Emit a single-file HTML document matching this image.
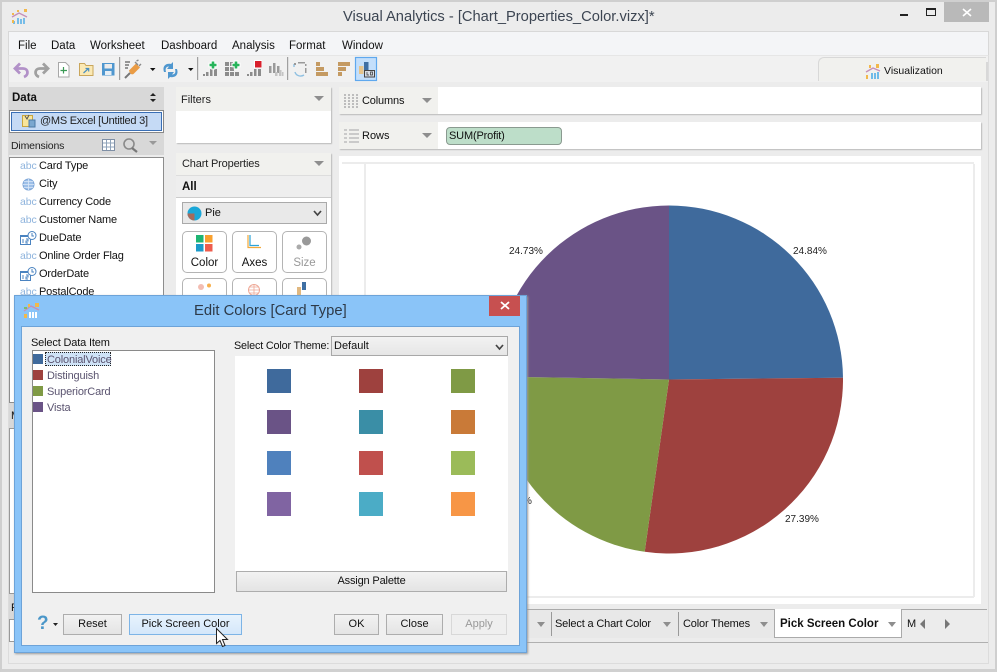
<!DOCTYPE html>
<html><head><meta charset="utf-8"><style>
html,body{margin:0;padding:0}
body{width:997px;height:672px;overflow:hidden;position:relative;background:#ececec;font-family:"Liberation Sans",sans-serif;font-size:11px;color:#111}
.a,.t{position:absolute}
.t{white-space:nowrap;line-height:14px;transform:translateY(1px)}
.n{letter-spacing:-.16px}
svg{position:absolute;overflow:visible}
.tri{position:absolute;width:0;height:0;border-left:5px solid transparent;border-right:5px solid transparent;border-top:5px solid #8e8e8e}
.btn{position:absolute;box-sizing:border-box;border:1px solid #adadad;background:linear-gradient(#f2f2f2,#e4e4e4);text-align:center;font-size:11px;line-height:19px;color:#111}
.pb{position:absolute;box-sizing:border-box;border:1px solid #b4b4b4;border-radius:5px;background:#fff;text-align:center;width:45px;height:42px}
.panel{position:absolute;background:#fff;box-shadow:1px 1px 1px #bbb}
.sw{position:absolute;width:24px;height:24px}
.li{position:absolute;left:33px;width:10px;height:10px}
.abc{color:#8fb4dd;font-size:10.5px;letter-spacing:-.1px}
</style></head><body>
<div class="a" style="left:0;top:0;width:997px;height:672px;border:2px solid #cfcfcf;border-bottom:3px solid #d0d0d0;box-sizing:border-box"></div>

<!-- title -->
<svg style="left:11px;top:9px" width="17" height="15" viewBox="0 0 17 15"><path d="M1 8L8 4l8 4" fill="none" stroke="#c58fb8" stroke-width="1.3"/><path d="M2 12h2v3H2zM6 9h2v6H6zM9 10h2v5H9zM12 9h2v6h-2z" fill="#77bde8"/><path d="M1 4h2v2H1zM6 1h2v2H6zM13 0h3v3h-3zM1 11h2v3H1z" fill="#f2b84b"/></svg>
<div class="t" style="left:343px;top:8px;font-size:14.7px;line-height:17px;color:#3c4552">Visual Analytics - [Chart_Properties_Color.vizx]*</div>
<div class="a" style="left:900px;top:14px;width:8px;height:2px;background:#222"></div>
<div class="a" style="left:926px;top:8px;width:8px;height:5px;border:1px solid #222;border-top-width:2px"></div>
<div class="a" style="left:944px;top:2px;width:45px;height:20px;background:#b9b9b9"></div>
<svg style="left:963px;top:9px" width="8" height="7"><path d="M0 0L8 7M8 0L0 7" stroke="#fff" stroke-width="1.6"/></svg>

<!-- menu -->
<div class="a" style="left:8px;top:31px;width:981px;height:25px;background:#f4f5f7;border:1px solid #d8d8d8;border-bottom:1px solid #e6e6e6;box-sizing:border-box"></div>
<div class="a" style="left:9px;top:56px;width:979px;height:26px;background:#f1f1f1"></div>
<div class="a" style="left:8px;top:56px;width:1px;height:607px;background:#dcdcdc"></div>
<div class="a" style="left:988px;top:56px;width:1px;height:607px;background:#dcdcdc"></div>
<div class="a" style="left:8px;top:663px;width:981px;height:1px;background:#dcdcdc"></div>
<div class="t" style="left:18px;top:38px;font-size:11.5px">File</div>
<div class="t" style="left:51px;top:38px;font-size:11.5px">Data</div>
<div class="t" style="left:90px;top:38px;font-size:11.5px">Worksheet</div>
<div class="t" style="left:161px;top:38px;font-size:11.5px">Dashboard</div>
<div class="t" style="left:232px;top:38px;font-size:11.5px">Analysis</div>
<div class="t" style="left:289px;top:38px;font-size:11.5px">Format</div>
<div class="t" style="left:342px;top:38px;font-size:11.5px">Window</div>

<!-- toolbar -->
<svg style="left:0;top:56px" width="400" height="26" viewBox="0 56 400 26">
<path d="M20 63.500L15 68.500L20 73.500M15.500 68.500H23C28.500 68.500 29 75 24 77" fill="none" stroke="#b291c8" stroke-width="2.800"/>
<path d="M43 63.500L48 68.500L43 73.500M47.500 68.500H40C34.500 68.500 34 75 39 77" fill="none" stroke="#a0a0a0" stroke-width="2.800"/>
<path d="M58.500 62.500h7l3.500 3.500v11h-10.500z" fill="#fff" stroke="#a8a8a8"/><path d="M63.500 67v6.500M60.500 70.500h6.500" stroke="#3a9a55" stroke-width="1.200"/>
<path d="M79.500 75.500v-12h5l1.500 2h7v10z" fill="#fbe9b4" stroke="#c9a65c"/><path d="M83.500 73l5-4.500m-3 0h3.200v3" stroke="#4a8fc0" fill="none" stroke-width="1.200"/>
<rect x="102.500" y="63.500" width="11.500" height="11.500" fill="#4f97cf" stroke="#4f97cf"/><rect x="104.500" y="64" width="7.500" height="4.500" fill="#ececec"/><rect x="105" y="71" width="6.500" height="4" fill="#e6eef5"/>
<rect x="119" y="57" width="1.200" height="23" fill="#a0a0a0"/>
<path d="M129 70.500l7-7 4 4-6.500 6.500q-3 1.500-4.500-3.500z" fill="#ea9c45"/><path d="M135 62l3 3M139 66l2-2M136.500 61l2-1" stroke="#8a8a8a" stroke-width="1.400" fill="none"/><path d="M125 62h5M125 65h4M125 68h3" stroke="#777" stroke-width="1.500"/><path d="M125 78l5-5" stroke="#777" stroke-width="2"/>
<path d="M150 68h5.500l-2.750 3z" fill="#111"/>
<path d="M164 72c-2-6 2-9 7-8l2-2v7h-6l2-2.500c-3 0-4 2-3 5.500z" fill="#4f97cf"/><path d="M177 69c2 6-2 9-7 8l-2 2v-7h6l-2 2.500c3 0 4-2 3-5.500z" fill="#4f97cf"/>
<path d="M188 68h5.500l-2.750 3z" fill="#111"/>
<rect x="197" y="57" width="1.200" height="23" fill="#a0a0a0"/>
<path d="M203 74h2v2h-2zM206 72h2.500v4H206zM210 69h2.500v7H210zM214 69h3v7h-3z" fill="#8c8c8c"/>
<path d="M213 60.500v9M208.500 65h9" stroke="#fff" stroke-width="4.500"/><path d="M213 61.500v7M209.500 65h7" stroke="#27b45a" stroke-width="2.600"/>
<path d="M225 62h4v4h-4zM230 62h3v4h-3zM225 67h4v4h-4zM230 67h4v4h-4zM225 72h4v4h-4zM230 72h4v4h-4zM235 72h4v4h-4z" fill="#8c8c8c"/>
<path d="M236 60.500v9M231.500 65h9" stroke="#fff" stroke-width="4.500"/><path d="M236 61.500v7M232.500 65h7" stroke="#27b45a" stroke-width="2.600"/>
<path d="M247 74h2v2h-2zM250 72h2.500v4H250zM254 69h2.500v7H254zM258 69h3v7h-3z" fill="#8c8c8c"/>
<rect x="254" y="60" width="8" height="8" fill="#fff"/><rect x="255" y="61" width="6.500" height="6.500" fill="#d81f2b"/>
<path d="M269 66h2.500v7H269zM273 63h2.500v10H273zM277 66h2.500v7H277z" fill="#9a9a9a"/><path d="M275 72h2.500v4H275zM279 70h2.500v6H279zM282 72h1.500v4H282z" fill="#c4c4c4"/>
<rect x="287" y="57" width="1.200" height="23" fill="#a0a0a0"/>
<path d="M294 64v3M295 72c1 4 6 5 9 3" fill="none" stroke="#8fc0e2" stroke-width="1.400"/><path d="M294 63h2v2h-2zM298 62h7v1.500h-7zM305 64h1.500v2H305zM305 68h1.500v5H305z" fill="#9a9a9a"/>
<path d="M316 62h4v4h-4zM316 67h8v4h-8zM316 72h12v4h-12z" fill="#c49a62"/>
<path d="M338 62h12v4h-12zM338 67h8v4h-8zM338 72h4v4h-4z" fill="#c49a62"/>
<rect x="355.500" y="57.500" width="21" height="23" fill="#c4dffb" stroke="#5fa8ee" stroke-width="1.200"/>
<rect x="359" y="66" width="4.500" height="8" fill="#e6c48c"/><rect x="364" y="62" width="4.500" height="9" fill="#3f6fa3"/><rect x="364.500" y="70.500" width="10" height="6.500" fill="#d7dde6" stroke="#444"/><path d="M367 72v3h2M370.500 72h2v3h-2z" fill="none" stroke="#333" stroke-width=".7"/>
</svg>

<!-- Visualization tab -->
<div class="a" style="left:818px;top:57px;width:168px;height:24px;background:#f1f1ee;border-radius:6px 0 0 0;border-top:1px solid #d8d8d8;border-left:1px solid #d8d8d8;box-sizing:border-box"></div>
<div class="a" style="left:986px;top:62px;width:2px;height:19px;background:#d8d8d8"></div>
<svg style="left:865px;top:64px" width="16" height="15"><path d="M1 8L8 4l7 3" fill="none" stroke="#c58fb8" stroke-width="1.300"/><path d="M6 9h2v6H6zM9 9h2v6H9zM12 8h2v7h-2z" fill="#6fbbe9"/><path d="M1 11h2v4H1zM11 0h3v4h-3zM4 1h2v3H4z" fill="#f2b84b"/></svg>
<div class="t" style="left:884px;top:63px;font-size:10.5px">Visualization</div>

<!-- Data pane -->
<div class="a" style="left:9px;top:87px;width:155px;height:68px;background:#d8d8d8"></div>
<div class="t" style="left:12px;top:90px;font-weight:bold;font-size:11.5px">Data</div>
<svg style="left:149px;top:92px" width="8" height="11"><path d="M1 4l3-3 3 3zM1 7h6L4 10z" fill="#222"/></svg>
<div class="a" style="left:9px;top:110px;width:155px;height:23px;box-sizing:border-box;border:1px solid #888;background:#fff;padding:1px"><div style="height:19px;box-sizing:border-box;border:1px solid #3a6fb5;background:#c5daf5"></div></div>
<svg style="left:22px;top:114px" width="14" height="14"><rect x=".5" y="1.500" width="10" height="11" fill="#f8e59a" stroke="#c9a53e"/><path d="M3 2l2 3 2-4" stroke="#555" fill="none"/><rect x="7" y="6" width="6" height="7" fill="#7aa7d0" stroke="#4a78a5"/></svg>
<div class="t" style="left:40px;top:113px;color:#222;letter-spacing:-.25px">@MS Excel [Untitled 3]</div>
<div class="t n" style="left:11px;top:138px;color:#222;font-size:10.5px">Dimensions</div>
<svg style="left:102px;top:138px" width="58" height="15"><rect x=".5" y="1.500" width="12" height="11" fill="#fff" stroke="#7f8fa5"/><path d="M1 5h11M1 9h11M4.500 2v10M8.500 2v10" stroke="#8fa3ba"/><circle cx="27" cy="6" r="5" fill="none" stroke="#8a8a8a" stroke-width="1.600"/><path d="M30 10l5 4" stroke="#777" stroke-width="2.200"/><path d="M47 3h8l-4 4z" fill="#999"/></svg>
<div class="a" style="left:9px;top:157px;width:155px;height:246px;box-sizing:border-box;border:1px solid #8d8d8d;background:#fff"></div>
<div class="t abc" style="left:20px;top:158px">abc</div><div class="t n" style="left:39px;top:158px">Card Type</div>
<svg style="left:22px;top:178px" width="13" height="13"><circle cx="6.500" cy="6.500" r="5.500" fill="#9ec0e8" stroke="#7fa7d8"/><path d="M1 6.500h11M6.500 1v11M2 3.500h9M2 9.500h9" stroke="#dbe8f7" stroke-width=".8"/></svg><div class="t n" style="left:39px;top:176px">City</div>
<div class="t abc" style="left:20px;top:194px">abc</div><div class="t n" style="left:39px;top:194px">Currency Code</div>
<div class="t abc" style="left:20px;top:212px">abc</div><div class="t n" style="left:39px;top:212px">Customer Name</div>
<svg style="left:20px;top:231px" width="17" height="15"><rect x=".5" y="4.500" width="10" height="9" fill="#fff" stroke="#4a83c0"/><rect x="1" y="4" width="10" height="2" fill="#4a83c0"/><path d="M3 8v4M6 8h2v2H6v2h2" stroke="#4a83c0" fill="none"/><circle cx="12" cy="4.500" r="4" fill="#fff" stroke="#4a83c0"/><path d="M12 2v3h2" stroke="#4a83c0" fill="none"/></svg><div class="t n" style="left:39px;top:230px">DueDate</div>
<div class="t abc" style="left:20px;top:248px">abc</div><div class="t n" style="left:39px;top:248px">Online Order Flag</div>
<svg style="left:20px;top:267px" width="17" height="15"><rect x=".5" y="4.500" width="10" height="9" fill="#fff" stroke="#4a83c0"/><rect x="1" y="4" width="10" height="2" fill="#4a83c0"/><path d="M3 8v4M6 8h2v2H6v2h2" stroke="#4a83c0" fill="none"/><circle cx="12" cy="4.500" r="4" fill="#fff" stroke="#4a83c0"/><path d="M12 2v3h2" stroke="#4a83c0" fill="none"/></svg><div class="t n" style="left:39px;top:266px">OrderDate</div>
<div class="t abc" style="left:20px;top:284px">abc</div><div class="t n" style="left:39px;top:284px">PostalCode</div>

<!-- lower left peek -->
<div class="a" style="left:9px;top:403px;width:155px;height:25px;background:#d8d8d8"></div>
<div class="t" style="left:11px;top:408px">M</div>
<div class="a" style="left:9px;top:428px;width:155px;height:166px;background:#fff;border:1px solid #999;box-sizing:border-box"></div>
<div class="a" style="left:9px;top:594px;width:155px;height:25px;background:#d8d8d8"></div>
<div class="t" style="left:11px;top:600px">P</div>
<div class="a" style="left:9px;top:619px;width:155px;height:23px;background:#fff;border:1px solid #999;box-sizing:border-box"></div>

<!-- Filters -->
<div class="panel" style="left:176px;top:87px;width:155px;height:56px"></div>
<div class="a" style="left:176px;top:87px;width:155px;height:24px;background:#f1f1ee"></div>
<div class="t" style="left:181px;top:92px;color:#222">Filters</div>
<div class="tri" style="left:314px;top:96px"></div>

<!-- Chart properties -->
<div class="panel" style="left:176px;top:153px;width:155px;height:460px"></div>
<div class="a" style="left:176px;top:153px;width:155px;height:22px;background:#f1f1ee;border-bottom:1px solid #ddd"></div>
<div class="t n" style="left:182px;top:156px;color:#222">Chart Properties</div>
<div class="tri" style="left:314px;top:161px"></div>
<div class="a" style="left:176px;top:176px;width:155px;height:21px;background:#eee;border-bottom:1px solid #ccc"></div>
<div class="t" style="left:182px;top:179px;font-weight:bold;font-size:11.5px">All</div>
<div class="a" style="left:182px;top:202px;width:145px;height:22px;box-sizing:border-box;border:1px solid #aaa;background:#e9e9e9"></div>
<svg style="left:187px;top:206px" width="15" height="15"><circle cx="7.500" cy="7.500" r="7" fill="#1aa7d8"/><path d="M7.500 7.500H.5a7 7 0 0 0 7 7z" fill="#a56a5c"/></svg>
<div class="t" style="left:205px;top:205px">Pie</div>
<svg style="left:313px;top:210px" width="9" height="7"><path d="M1 1l3.500 4L8 1" fill="none" stroke="#444" stroke-width="1.700"/></svg>
<div class="pb" style="left:182px;top:231px"></div><div class="pb" style="left:232px;top:231px"></div><div class="pb" style="left:282px;top:231px"></div>
<div class="pb" style="left:182px;top:278px"></div><div class="pb" style="left:232px;top:278px"></div><div class="pb" style="left:282px;top:278px"></div>
<svg style="left:196px;top:235px" width="17" height="17"><rect width="7.500" height="7.500" fill="#1fb573"/><rect x="9" width="7.500" height="7.500" fill="#f9a02e"/><rect y="9" width="7.500" height="7.500" fill="#1b9ac9"/><rect x="9" y="9" width="7.500" height="7.500" fill="#ee5c4d"/></svg>
<svg style="left:247px;top:235px" width="15" height="15"><path d="M1 0v12.500h13" fill="none" stroke="#f2a93b" stroke-width="1.200"/><path d="M3 0v10.500h9" fill="none" stroke="#2ca3d8" stroke-width="1.200"/></svg>
<svg style="left:296px;top:236px" width="16" height="14"><circle cx="10.500" cy="5" r="4.500" fill="#999"/><circle cx="3" cy="11" r="2.500" fill="#aaa"/></svg>
<div class="t" style="left:182px;top:255px;width:45px;text-align:center;font-size:11.5px">Color</div>
<div class="t" style="left:232px;top:255px;width:45px;text-align:center;font-size:11.5px">Axes</div>
<div class="t" style="left:282px;top:255px;width:45px;text-align:center;color:#999;font-size:11.5px">Size</div>
<svg style="left:196px;top:283px" width="18" height="13"><circle cx="5" cy="4" r="3" fill="#f3bdb2"/><circle cx="13" cy="2.500" r="2" fill="#f7b04d"/></svg>
<svg style="left:247px;top:283px" width="14" height="13"><circle cx="7" cy="7" r="5.500" fill="none" stroke="#eea896"/><path d="M1 7h12M7 1v12M2 4h10M2 10h10" stroke="#eea896" stroke-width=".8"/></svg>
<svg style="left:297px;top:282px" width="15" height="13"><rect y="5" width="4" height="8" fill="#e0b880"/><rect x="5" width="4" height="8" fill="#3f6fa3"/></svg>

<!-- Columns / Rows -->
<div class="panel" style="left:339px;top:87px;width:642px;height:27px"></div>
<div class="a" style="left:339px;top:87px;width:99px;height:27px;background:#f1f1ee"></div>
<svg style="left:344px;top:94px" width="15" height="14"><path d="M1 0v14M5 0v14M9 0v14M13 0v14" stroke="#bdbdbd" stroke-width="2" stroke-dasharray="2 1"/></svg>
<div class="t n" style="left:362px;top:93px">Columns</div>
<div class="tri" style="left:422px;top:98px"></div>
<div class="panel" style="left:339px;top:122px;width:642px;height:27px"></div>
<div class="a" style="left:339px;top:122px;width:99px;height:27px;background:#f1f1ee"></div>
<svg style="left:344px;top:129px" width="15" height="14"><path d="M0 1h3M5 1h10M0 5h3M5 5h10M0 9h3M5 9h10M0 13h3M5 13h10" stroke="#bdbdbd" stroke-width="1.600"/></svg>
<div class="t" style="left:362px;top:128px">Rows</div>
<div class="tri" style="left:422px;top:133px"></div>
<div class="a" style="left:446px;top:127px;width:116px;height:18px;box-sizing:border-box;border:1px solid #8a9a90;border-radius:4px;background:#bddec9"></div>
<div class="t n" style="left:449px;top:128px">SUM(Profit)</div>

<!-- Chart area -->
<div class="a" style="left:339px;top:156px;width:642px;height:448px;background:#fff"></div>
<div class="a" style="left:342px;top:162px;width:632px;height:2px;background:#ececec"></div>
<div class="a" style="left:364px;top:164px;width:2px;height:433px;background:#ececec"></div>
<div class="a" style="left:973px;top:164px;width:2px;height:433px;background:#ececec"></div>
<div class="a" style="left:342px;top:596px;width:632px;height:2px;background:#ececec"></div>
<svg style="left:0;top:0" width="997" height="672">
<path d="M669 379.500V205.500A174 174 0 0 1 843 377.700Z" fill="#3f6a9c"/>
<path d="M669 379.500L843 377.700A174 174 0 0 1 644.700 551.800Z" fill="#9e413e"/>
<path d="M669 379.500L644.700 551.800A174 174 0 0 1 495 376.500Z" fill="#7f9a45"/>
<path d="M669 379.500L495 376.500A174 174 0 0 1 669 205.500Z" fill="#6a5386"/>
</svg>
<div class="t" style="left:509px;top:244px;font-size:10px;color:#222">24.73%</div>
<div class="t" style="left:793px;top:244px;font-size:10px;color:#222">24.84%</div>
<div class="t" style="left:785px;top:512px;font-size:10px;color:#222">27.39%</div>
<div class="t" style="left:523px;top:494px;font-size:10px;color:#222">%</div>

<!-- tabs -->
<div class="a" style="left:526px;top:609px;width:461px;height:1px;background:#aaa"></div>
<div class="a" style="left:526px;top:610px;width:370px;height:28px;background:#e8e8e8"></div>
<div class="a" style="left:526px;top:642px;width:462px;height:1px;background:#b0b0b0"></div>
<div class="tri" style="left:537px;top:622px;border-width:5px 4px 0"></div>
<div class="a" style="left:551px;top:612px;width:1px;height:24px;background:#999"></div>
<div class="t n" style="left:555px;top:616px">Select a Chart Color</div>
<div class="tri" style="left:663px;top:622px;border-width:5px 4px 0"></div>
<div class="a" style="left:678px;top:612px;width:1px;height:24px;background:#999"></div>
<div class="t n" style="left:683px;top:616px">Color Themes</div>
<div class="tri" style="left:760px;top:622px;border-width:5px 4px 0"></div>
<div class="a" style="left:774px;top:609px;width:128px;height:29px;box-sizing:border-box;border:1px solid #aaa;border-top:none;background:#fff"></div>
<div class="t" style="left:780px;top:616px;font-weight:bold;font-size:11.5px">Pick Screen Color</div>
<div class="tri" style="left:888px;top:622px;border-width:5px 4px 0"></div>
<div class="t" style="left:907px;top:616px">M</div>
<div class="a" style="left:916px;top:610px;width:70px;height:32px;background:#ececec"></div>
<svg style="left:920px;top:619px" width="30" height="11"><path d="M5 0v10L0 5z M25 0v10l5-5z" fill="#777"/></svg>

<!-- Dialog -->
<div class="a" style="left:14px;top:295px;width:513px;height:358px;box-sizing:border-box;background:#8ac4f8;border:1px solid #6da3d8;box-shadow:1px 1px 2px #999"></div>
<svg style="left:23px;top:302px" width="18" height="16"><path d="M1 9L8 4l8 4" fill="none" stroke="#c58fb8" stroke-width="1.300"/><path d="M6 10h2v6H6zM9 10h2v6H9zM12 10h2v6h-2z" fill="#fff"/><path d="M1 12h3v4H1zM5 2h2v3H5zM12 1h4v4h-4z" fill="#f2b84b"/><path d="M1 5h3v2H1z" fill="#7bbf6a"/></svg>
<div class="t" style="left:194px;top:302px;font-size:14.8px;line-height:17px;color:#2e3a48">Edit Colors [Card Type]</div>
<div class="a" style="left:489px;top:296px;width:31px;height:20px;background:#c75050"></div>
<svg style="left:501px;top:302px" width="8" height="7"><path d="M0 0L8 7M8 0L0 7" stroke="#fff" stroke-width="1.800"/></svg>
<div class="a" style="left:21px;top:326px;width:499px;height:320px;box-sizing:border-box;background:#f0f0f0;border:1px solid #6da3d8"></div>
<div class="t n" style="left:31px;top:335px;color:#111">Select Data Item</div>
<div class="a" style="left:32px;top:350px;width:183px;height:243px;box-sizing:border-box;background:#fff;border:1px solid #8a8a8a"></div>
<div class="li" style="top:354px;background:#3f6a9c"></div><div class="a" style="left:45px;top:352px;width:66px;height:14px;box-sizing:border-box;border:1px dotted #222;background:#cfe3f7"></div><div class="t n" style="left:47px;top:352px;color:#5b5470">ColonialVoice</div>
<div class="li" style="top:370px;background:#9e413e"></div><div class="t n" style="left:47px;top:368px;color:#5b5470">Distinguish</div>
<div class="li" style="top:386px;background:#7f9a45"></div><div class="t n" style="left:47px;top:384px;color:#5b5470">SuperiorCard</div>
<div class="li" style="top:402px;background:#6a5386"></div><div class="t n" style="left:47px;top:400px;color:#5b5470">Vista</div>

<div class="t n" style="left:234px;top:338px;font-size:10.8px">Select Color Theme:</div>
<div class="a" style="left:331px;top:336px;width:177px;height:20px;box-sizing:border-box;border:1px solid #a8a8a8;background:linear-gradient(#f2f2f2,#e6e6e6)"></div>
<div class="t" style="left:334px;top:338px">Default</div>
<svg style="left:495px;top:344px" width="9" height="7"><path d="M1 1l3.500 4L8 1" fill="none" stroke="#444" stroke-width="1.700"/></svg>
<div class="a" style="left:235px;top:356px;width:273px;height:215px;background:#fff"></div>
<div class="sw" style="left:267px;top:369px;background:#3f6a9c"></div><div class="sw" style="left:359px;top:369px;background:#9e413e"></div><div class="sw" style="left:451px;top:369px;background:#7f9a45"></div>
<div class="sw" style="left:267px;top:410px;background:#6a5386"></div><div class="sw" style="left:359px;top:410px;background:#3a8ea6"></div><div class="sw" style="left:451px;top:410px;background:#c97a38"></div>
<div class="sw" style="left:267px;top:451px;background:#4f81bd"></div><div class="sw" style="left:359px;top:451px;background:#c0504d"></div><div class="sw" style="left:451px;top:451px;background:#9bbb59"></div>
<div class="sw" style="left:267px;top:492px;background:#8064a2"></div><div class="sw" style="left:359px;top:492px;background:#4bacc6"></div><div class="sw" style="left:451px;top:492px;background:#f79646"></div>
<div class="btn" style="left:236px;top:571px;width:271px;height:21px;letter-spacing:-.16px">Assign Palette</div>

<div class="t" style="left:37px;top:612px;font-size:19px;line-height:22px;font-weight:bold;color:#4b97c9">?</div>
<svg style="left:52px;top:623px" width="7" height="4"><path d="M1 0h5L3.500 3z" fill="#222"/></svg>
<div class="btn" style="left:63px;top:614px;width:59px;height:21px">Reset</div>
<div class="btn" style="left:129px;top:614px;width:113px;height:21px;background:linear-gradient(#e8f3fd,#d4e7fa);border-color:#7db4e6">Pick Screen Color</div>
<div class="btn" style="left:334px;top:614px;width:45px;height:21px">OK</div>
<div class="btn" style="left:386px;top:614px;width:57px;height:21px">Close</div>
<div class="btn" style="left:451px;top:614px;width:56px;height:21px;color:#999;border-color:#d8d8d8;background:#efefef">Apply</div>
<svg style="left:216px;top:628px" width="13" height="20"><path d="M.5.5v15l3.500-3 2.500 6 2.500-1-2.500-6h5z" fill="#fff" stroke="#222"/></svg>
</body></html>
